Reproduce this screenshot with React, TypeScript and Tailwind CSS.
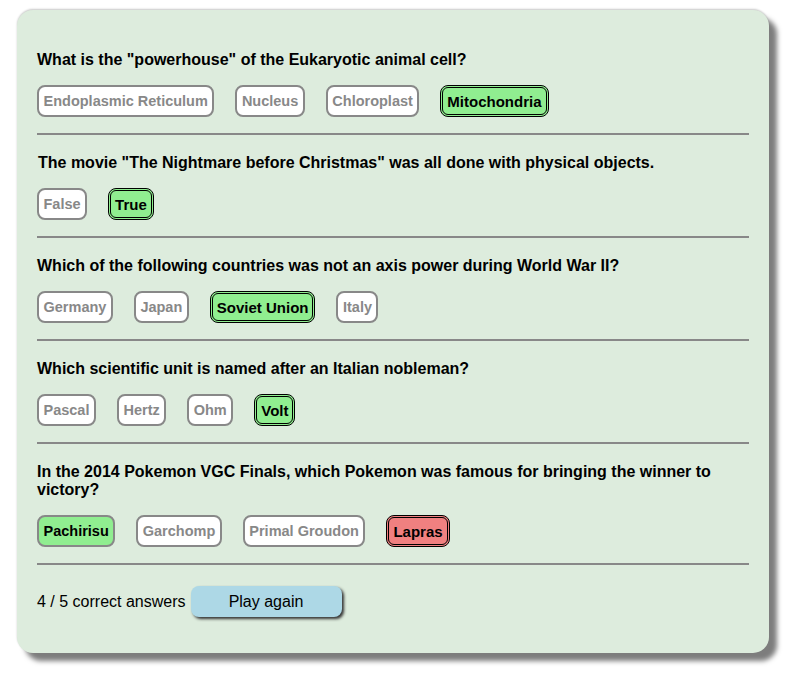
import React from "react";

type Opt = { label: string; kind: "plain" | "correct" | "wrong" | "missed" };
type Q = { q: string; opts: Opt[]; indent?: boolean };

const questions: Q[] = [
  {
    q: 'What is the "powerhouse" of the Eukaryotic animal cell?',
    opts: [
      { label: "Endoplasmic Reticulum", kind: "plain" },
      { label: "Nucleus", kind: "plain" },
      { label: "Chloroplast", kind: "plain" },
      { label: "Mitochondria", kind: "correct" },
    ],
  },
  {
    q: 'The movie "The Nightmare before Christmas" was all done with physical objects.',
    indent: true,
    opts: [
      { label: "False", kind: "plain" },
      { label: "True", kind: "correct" },
    ],
  },
  {
    q: "Which of the following countries was not an axis power during World War II?",
    opts: [
      { label: "Germany", kind: "plain" },
      { label: "Japan", kind: "plain" },
      { label: "Soviet Union", kind: "correct" },
      { label: "Italy", kind: "plain" },
    ],
  },
  {
    q: "Which scientific unit is named after an Italian nobleman?",
    opts: [
      { label: "Pascal", kind: "plain" },
      { label: "Hertz", kind: "plain" },
      { label: "Ohm", kind: "plain" },
      { label: "Volt", kind: "correct" },
    ],
  },
  {
    q: "In the 2014 Pokemon VGC Finals, which Pokemon was famous for bringing the winner to victory?",
    opts: [
      { label: "Pachirisu", kind: "missed" },
      { label: "Garchomp", kind: "plain" },
      { label: "Primal Groudon", kind: "plain" },
      { label: "Lapras", kind: "wrong" },
    ],
  },
];

function OptionButton({ opt }: { opt: Opt }) {
  if (opt.kind === "plain")
    return (
      <div className="h-[32px] flex items-center px-[4.5px] bg-white border-2 border-[#888888] rounded-[8px] text-[14.5px] font-bold text-[#888888] leading-none">
        {opt.label}
      </div>
    );
  if (opt.kind === "missed")
    return (
      <div className="h-[32px] flex items-center px-[4.5px] bg-[#90ee90] border-2 border-[#888888] rounded-[8px] text-[14.5px] font-bold text-black leading-none">
        {opt.label}
      </div>
    );
  if (opt.kind === "wrong")
    return (
      <div className="h-[32px] flex items-center px-[4px] bg-[#f08080] border-[3px] border-double border-black rounded-[8px] text-[15px] font-bold text-black leading-none">
        {opt.label}
      </div>
    );
  return (
    <div className="h-[32px] flex items-center px-[4px] bg-[#90ee90] border-[3px] border-double border-black rounded-[8px] text-[15px] font-bold text-black leading-none">
      {opt.label}
    </div>
  );
}

export default function App() {
  return (
    <div
      className="w-[787px] h-[675px] bg-white pt-[10px] pl-[17px]"
      style={{ fontFamily: '"Liberation Sans", Arial, sans-serif' }}
    >
      <div className="w-[752px] h-[643px] bg-[#ddecdd] rounded-[16px] shadow-[8px_8px_5px_#7d7d7d,0_-1px_2px_#c8c8c8] px-[20px] pt-[41px]">
        {questions.map((item, i) => (
          <div key={i}>
            {i > 0 && <div className="h-[19px]" />}
            <div className={`text-[16px] font-bold leading-[18px] text-black ${item.indent ? "pl-[1px]" : ""}`}>{item.q}</div>
            <div className="flex gap-[21px] mt-[16px]">
              {item.opts.map((o, j) => (
                <OptionButton key={j} opt={o} />
              ))}
            </div>
            <div className="h-[2px] bg-[#888888] mt-[16px]" />
          </div>
        ))}
        <div className="flex items-center mt-[21px] text-[16px] leading-[18px] text-black">
          <span>4 / 5 correct answers</span>
          <div className="ml-[5px] w-[151px] h-[31px] flex items-center justify-center bg-[#add8e6] rounded-[8px] shadow-[2px_2px_3px_#333]">
            Play again
          </div>
        </div>
      </div>
    </div>
  );
}
